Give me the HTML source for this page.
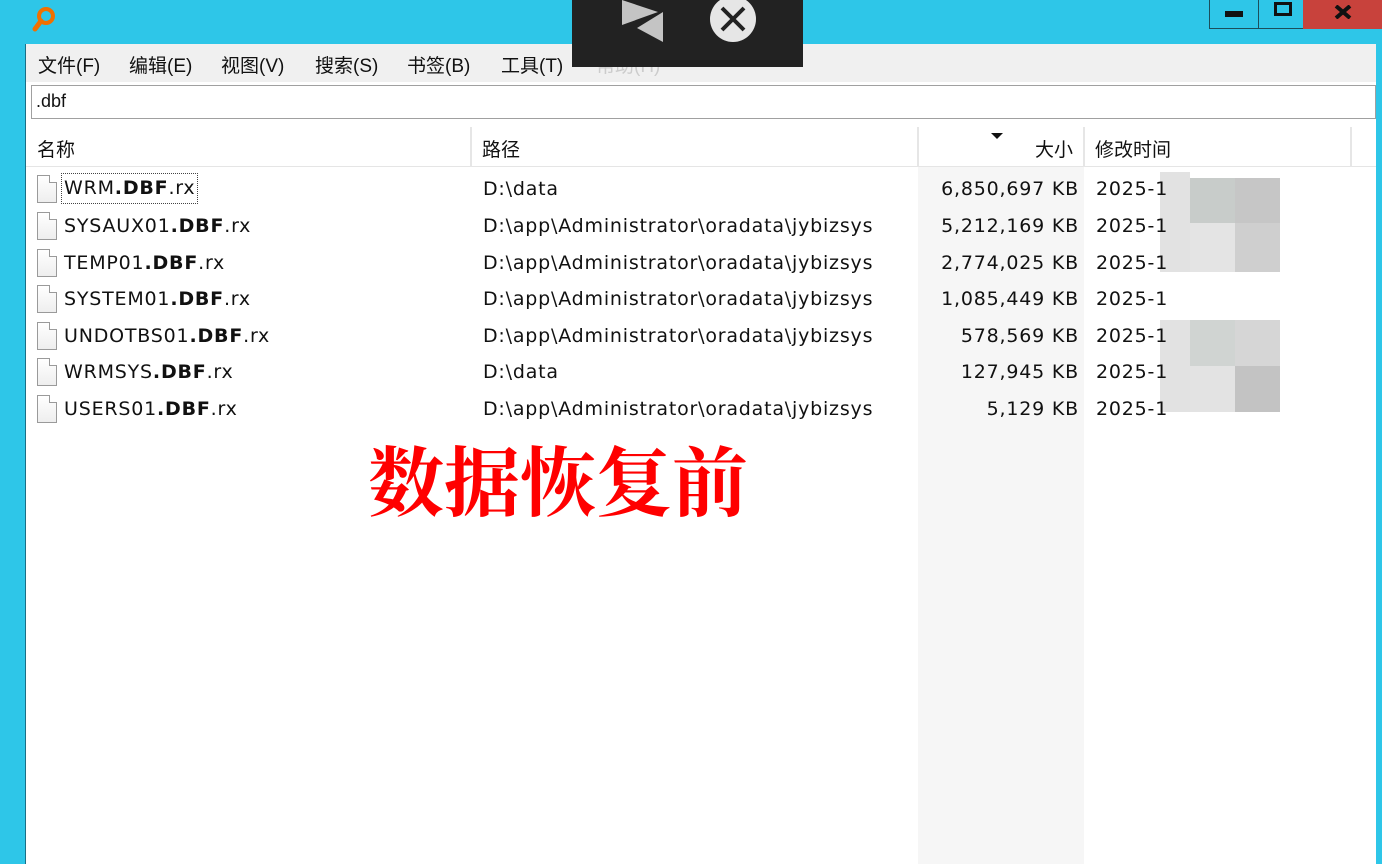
<!DOCTYPE html>
<html><head><meta charset="utf-8"><style>
*{margin:0;padding:0;box-sizing:border-box}
body{width:1382px;height:864px;overflow:hidden;background:#2ec6e8;position:relative;font-family:"Liberation Sans","Noto Sans CJK SC",sans-serif;color:#111}
.abs{position:absolute}
#win{left:25px;top:44px;width:1351px;height:820px;background:#fff;border-left:1px solid #1a6f86}
#menu{left:26px;top:44px;width:1350px;height:38px;background:#f0f0f0;font-size:19px}
#menu span{position:absolute;top:7px}
#search{left:31px;top:85px;width:1345px;height:34px;border:1px solid #a0a0a0;background:#fff;font-size:18px;padding:5px 4px}
#hdr{left:26px;top:127px;width:1350px;height:40px;background:#fff;border-bottom:1px solid #e5e5e5;font-size:19px}
.hc{position:absolute;top:0;height:40px;border-right:2px solid #e6e6e6;padding-top:8px}
#sizebg{left:918px;top:167px;width:166px;height:697px;background:#f6f6f6}
.row{position:absolute;left:0;width:1382px;height:36px;font-size:19px;font-family:"DejaVu Sans",sans-serif;letter-spacing:0.8px}
.row div{position:absolute;top:6px;white-space:nowrap}
.ic{left:37px!important;top:3px!important;width:20px;height:28px;border:1px solid #9a9a9a;background:linear-gradient(#fff,#eee)}
.ic:after{content:"";position:absolute;right:-1px;top:-1px;width:7px;height:7px;background:#fff;border-left:1px solid #9a9a9a;border-bottom:1px solid #9a9a9a}
.n{left:64px}.p{left:483px}.s{right:303px;text-align:right}.d{left:1096px}
b{font-weight:bold}
.blk{position:absolute}
</style></head><body>
<svg class="abs" style="left:30px;top:4px" width="30" height="30" viewBox="0 0 30 30"><circle cx="16" cy="12" r="7" fill="none" stroke="#f07000" stroke-width="4"/><line x1="11" y1="17" x2="5" y2="25" stroke="#f07000" stroke-width="5" stroke-linecap="round"/></svg>
<div class="abs" style="left:1209px;top:0;width:50px;height:29px;border:1px solid #1b4f5c;border-top:none;background:#2ec6e8"><div class="abs" style="left:15px;top:11px;width:18px;height:6px;background:#111"></div></div>
<div class="abs" style="left:1258px;top:0;width:46px;height:29px;border:1px solid #1b4f5c;border-top:none;background:#2ec6e8"><div class="abs" style="left:15px;top:2px;width:18px;height:14px;border:3px solid #111"></div></div>
<div class="abs" style="left:1303px;top:0;width:79px;height:29px;background:#c8423c"><svg class="abs" style="left:31px;top:5px" width="18" height="14"><path d="M2 1 L16 13 M16 1 L2 13" stroke="#111" stroke-width="4"/></svg></div>
<div id="win" class="abs"></div>
<div id="menu" class="abs">
<span style="left:12px">文件(F)</span><span style="left:103px">编辑(E)</span><span style="left:195px">视图(V)</span><span style="left:289px">搜索(S)</span><span style="left:381px">书签(B)</span><span style="left:475px">工具(T)</span><span style="left:570px;color:#ccc">帮助(H)</span>
</div>
<div id="search" class="abs">.dbf</div>
<div id="hdr" class="abs">
<div class="hc" style="left:0;width:446px;padding-left:11px">名称</div>
<div class="hc" style="left:446px;width:447px;padding-left:10px">路径</div>
<div class="hc" style="left:893px;width:166px;text-align:right;padding-right:10px">大小<div class="abs" style="left:72px;top:6px;width:0;height:0;border-left:6px solid transparent;border-right:6px solid transparent;border-top:6px solid #111"></div></div>
<div class="hc" style="left:1059px;width:267px;padding-left:10px">修改时间</div>
</div>
<div id="sizebg" class="abs"></div>
<div class="blk" style="left:1160px;top:172px;width:30px;height:100px;background:#e2e2e2"></div>
<div class="blk" style="left:1190px;top:178px;width:45px;height:45px;background:#c8ccca"></div>
<div class="blk" style="left:1235px;top:178px;width:45px;height:45px;background:#c6c6c6"></div>
<div class="blk" style="left:1190px;top:223px;width:45px;height:49px;background:#e4e4e4"></div>
<div class="blk" style="left:1235px;top:223px;width:45px;height:49px;background:#cfcfcf"></div>
<div class="blk" style="left:1160px;top:320px;width:30px;height:92px;background:#e2e2e2"></div>
<div class="blk" style="left:1190px;top:320px;width:45px;height:46px;background:#d0d4d2"></div>
<div class="blk" style="left:1235px;top:320px;width:45px;height:46px;background:#d6d6d6"></div>
<div class="blk" style="left:1190px;top:366px;width:45px;height:46px;background:#e3e3e3"></div>
<div class="blk" style="left:1235px;top:366px;width:45px;height:46px;background:#c3c3c3"></div>
<div class="row" style="top:172px"><div class="ic"></div><div class="n" style="outline:1px dotted #444;top:2px;padding:3px 2px 4px;left:62px">WRM<b>.DBF</b>.rx</div><div class="p">D:\data</div><div class="s">6,850,697 KB</div><div class="d">2025-1</div></div>
<div class="row" style="top:209px"><div class="ic"></div><div class="n">SYSAUX01<b>.DBF</b>.rx</div><div class="p">D:\app\Administrator\oradata\jybizsys</div><div class="s">5,212,169 KB</div><div class="d">2025-1</div></div>
<div class="row" style="top:246px"><div class="ic"></div><div class="n">TEMP01<b>.DBF</b>.rx</div><div class="p">D:\app\Administrator\oradata\jybizsys</div><div class="s">2,774,025 KB</div><div class="d">2025-1</div></div>
<div class="row" style="top:282px"><div class="ic"></div><div class="n">SYSTEM01<b>.DBF</b>.rx</div><div class="p">D:\app\Administrator\oradata\jybizsys</div><div class="s">1,085,449 KB</div><div class="d">2025-1</div></div>
<div class="row" style="top:319px"><div class="ic"></div><div class="n">UNDOTBS01<b>.DBF</b>.rx</div><div class="p">D:\app\Administrator\oradata\jybizsys</div><div class="s">578,569 KB</div><div class="d">2025-1</div></div>
<div class="row" style="top:355px"><div class="ic"></div><div class="n">WRMSYS<b>.DBF</b>.rx</div><div class="p">D:\data</div><div class="s">127,945 KB</div><div class="d">2025-1</div></div>
<div class="row" style="top:392px"><div class="ic"></div><div class="n">USERS01<b>.DBF</b>.rx</div><div class="p">D:\app\Administrator\oradata\jybizsys</div><div class="s">5,129 KB</div><div class="d">2025-1</div></div>
<div class="abs" style="left:368px;top:440px;font-family:'Liberation Serif','Noto Serif CJK SC',serif;font-size:76px;line-height:90px;color:#f00;font-weight:bold">数据恢复前</div>
<div class="abs" style="left:572px;top:0;width:231px;height:67px;background:#222">
<svg class="abs" style="left:0;top:0" width="231" height="67" viewBox="572 0 231 67"><polygon points="622,0 622,25 658,12" fill="#c4c4c4"/><polygon points="663,12 663,42 637,28" fill="#c4c4c4"/><circle cx="733" cy="19" r="23" fill="#e6e6e6"/><path d="M722 8 L744 30 M744 8 L722 30" stroke="#222" stroke-width="4"/></svg>
</div>
</body></html>
